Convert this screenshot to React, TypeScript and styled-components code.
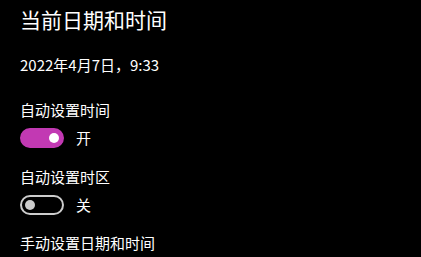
import styled, { createGlobalStyle } from "styled-components";

const GlobalStyle = createGlobalStyle`
  html, body {
    margin: 0;
    padding: 0;
    background: #000;
  }
  body {
    font-family: "Noto Sans CJK SC", "Noto Sans", sans-serif;
    color: #fff;
  }
`;

const Page = styled.div`
  width: 421px;
  height: 257px;
  overflow: hidden;
  padding: 5px 0 0 20px;
  box-sizing: border-box;
  display: flex;
  flex-direction: column;
`;

const Title = styled.h1`
  margin: 0;
  font-size: 21px;
  font-weight: 400;
  line-height: 28px;
`;

const DateText = styled.div`
  margin-top: 22px;
  font-size: 15px;
  line-height: 20px;
`;

const Label = styled.div<{ $top: number }>`
  margin-top: ${({ $top }) => $top}px;
  font-size: 15px;
  line-height: 20px;
`;

const ToggleRow = styled.div`
  margin-top: 8px;
  display: flex;
  align-items: center;
  gap: 12px;
  height: 20px;
`;

const Track = styled.div<{ $on: boolean }>`
  width: 44px;
  height: 20px;
  box-sizing: border-box;
  border-radius: 10px;
  border: 2px solid ${({ $on }) => ($on ? "#c239b3" : "#cccccc")};
  background: ${({ $on }) => ($on ? "#c239b3" : "transparent")};
  display: flex;
  align-items: center;
  justify-content: ${({ $on }) => ($on ? "flex-end" : "flex-start")};
  padding: 0 3px;
`;

const Knob = styled.div<{ $on: boolean }>`
  width: 10px;
  height: 10px;
  border-radius: 50%;
  background: ${({ $on }) => ($on ? "#ffffff" : "#cccccc")};
`;

const StateText = styled.span`
  font-size: 15px;
  line-height: 20px;
`;

function Toggle({ on }: { on: boolean }) {
  return (
    <ToggleRow>
      <Track $on={on}>
        <Knob $on={on} />
      </Track>
      <StateText>{on ? "开" : "关"}</StateText>
    </ToggleRow>
  );
}

export default function App() {
  return (
    <>
      <GlobalStyle />
      <Page>
        <Title>当前日期和时间</Title>
        <DateText>2022年4月7日，9:33</DateText>
        <Label $top={25}>自动设置时间</Label>
        <Toggle on />
        <Label $top={19}>自动设置时区</Label>
        <Toggle on={false} />
        <Label $top={18}>手动设置日期和时间</Label>
      </Page>
    </>
  );
}
